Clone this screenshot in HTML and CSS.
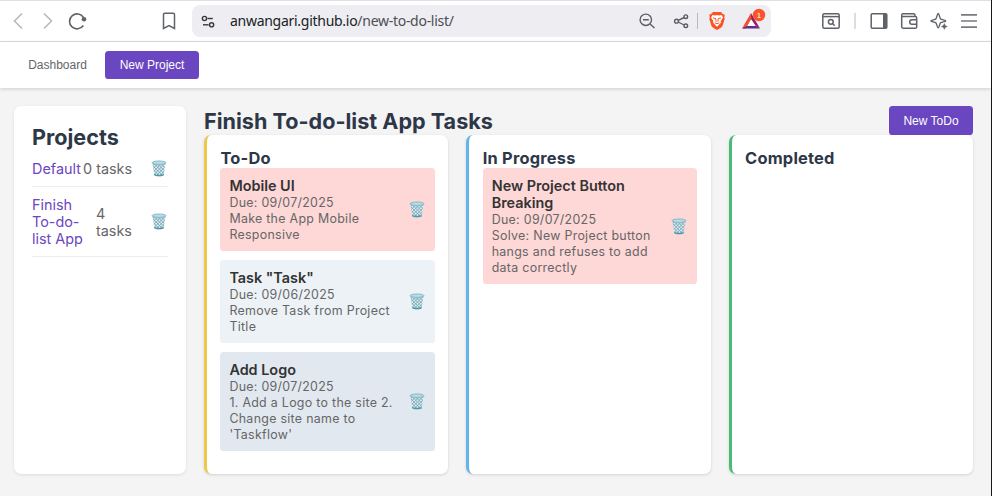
FILE: index.html
```html
<!DOCTYPE html>
<html lang="en">
<head>
<meta charset="utf-8">
<title>To-do list</title>
<link rel="stylesheet" href="styles.css">
</head>
<body>
<svg class="defs" width="0" height="0" aria-hidden="true">
  <defs>
    <pattern id="mesh" width="2.400" height="2.400" patternUnits="userSpaceOnUse" patternTransform="rotate(45)">
      <path d="M0 0H3M0 0V3" stroke="#6d9dad" stroke-width="1.200"/>
    </pattern>
    <symbol id="trash" viewBox="0 0 16 17">
      <path d="M1.600 3.200 3.300 15c.2 1.700 9.200 1.700 9.400 0L14.400 3.200Z" fill="#e0eff3"/>
      <path d="M1.600 3.200 3.300 15c.2 1.700 9.200 1.700 9.400 0L14.400 3.200Z" fill="url(#mesh)"/>
      <path d="M3.100 14 3.300 15.300c1 1.400 8.400 1.400 9.400 0l.2-1.300c-2 1.100-7.800 1.100-9.800 0Z" fill="#4c9bad"/>
      <ellipse cx="8" cy="2.700" rx="6.900" ry="1.700" fill="#b9dce6" stroke="#7bb3c2" stroke-width=".9"/>
      <path d="M1.300 4c2 1.500 11.400 1.500 13.400 0" fill="none" stroke="#94c2cf" stroke-width=".8"/>
    </symbol>
  </defs>
</svg>
<div class="window">
  <div class="browser-bar">
    <svg class="icons" width="190" height="40" viewBox="0 0 190 40" fill="none" stroke="#5f6368" stroke-width="1.600">
      <path d="M22 13.500 14.500 21 22 28.500M44 13.500 51.500 21 44 28.500" stroke="#b9b9bd"/>
      <path d="M83.300 25.500A7.500 7.500 0 1 1 83.500 17.500"/>
      <circle cx="84" cy="19.300" r="2.300" fill="#5f6368" stroke="none"/>
      <path d="M163.500 14.500q0-1.200 1.200-1.200h8.600q1.200 0 1.200 1.200v14L169 25.500l-5.500 3Z" stroke-width="1.500"/>
    </svg>
    <div class="address">
      <svg class="tune" width="16" height="16" viewBox="0 0 16 16" fill="none" stroke="#37383c" stroke-width="1.400">
        <circle cx="4.500" cy="4.500" r="2.100"/><path d="M7.500 4.500H12.800"/>
        <circle cx="11.600" cy="10.800" r="2.100"/><path d="M3 10.800H8.600"/>
      </svg>
      <span class="url">anwangari.github.io<span class="path">/new-to-do-list/</span></span>
      <svg class="address-icons" width="136" height="32" viewBox="635 5 136 32" fill="none">
        <g stroke="#5b5d63" stroke-width="1.400">
          <circle cx="645.800" cy="19.800" r="5.700"/><path d="M650 24 654.500 28M643 19.800H648.800"/>
          <circle cx="676.500" cy="21.200" r="1.900"/><circle cx="685.800" cy="16.700" r="1.800"/><circle cx="685.800" cy="25.800" r="1.800"/>
          <path d="m678.300 20.400 5.800-2.900M678.300 22l5.800 3"/>
        </g>
        <path d="M697.500 13V29" stroke="#b8b8be"/>
        <path d="m713 12 h8l2 2.200 1.700.3-.4 3 .4 1.500-2.200 7q-.6 1.300-5.500 4-4.900-2.700-5.500-4l-2.200-7 .4-1.500-.4-3 1.700-.3Z" fill="#fb5421"/>
        <path d="m712.500 15 2.800.6 1.700-.5 1.700.5 2.800-.6 1.500 2.500-2.300 3.600.2 1.700-3.900 4-3.900-4 .2-1.700-2.300-3.600Z" fill="#fff"/>
        <path d="m713 18 2.700.5.400 3.200M721 18l-2.700.5-.4 3.200M714.700 22.800l2.300 1 2.300-1" stroke="#fb5421" stroke-width="1"/>
        <path d="M751 13 742 28.500H746L751.200 19.500Z" fill="#f04e32"/>
        <path d="m751 13 9 15.500-4-2.300-4.800-7Z" fill="#9b1f63"/>
        <path d="M742 28.500h18l-4-2.500h-9Z" fill="#5f2d91"/>
        <path d="m751.100 19.600 3.800 6.500h-7.600Z" fill="#fff"/>
        <circle cx="759" cy="15" r="6.200" fill="#fb542b"/>
        <text class="badge" x="759" y="18" text-anchor="middle">1</text>
      </svg>
    </div>
    <svg class="icons-right" width="220" height="40" viewBox="771 1 220 40" fill="none" stroke="#5f6368" stroke-width="1.500">
      <rect x="822.800" y="13.800" width="16.400" height="14.400" rx="1.500"/><path d="M823 16.600H839"/>
      <circle cx="830.800" cy="21.800" r="2.400"/><path d="m832.700 23.700 2 2"/>
      <path d="M855 13V29" stroke="#dcdce2" stroke-width="2"/>
      <rect x="871.200" y="13.800" width="15.600" height="14.400" rx="1"/><path d="M883 14h4v14h-4Z" fill="#5f6368" stroke="none"/>
      <path d="M901.700 16.500h13.600q1.400 0 1.400 1.400v9q0 1.300-1.400 1.300h-12.200q-1.400 0-1.400-1.400V15.200q0-1.400 1.400-1.400h10.500q1.400 0 1.400 1.400v1M917 19.700h-5q-2.300 0-2.300 2.300t2.300 2.300h5"/>
      <path d="M938.200 13.500c1 0 1.400 4.600 2.400 5.500s5.200 1 5.200 1.900-4.200 1-5.200 1.900-1.400 5-2.400 5-1.400-4.100-2.400-5-4.900-1-4.900-1.900 3.900-1 4.900-1.900 1.400-5.500 2.400-5.500Z" stroke-width="1.400"/>
      <path d="m944.300 22.700 1.200 2.600 2.600 1.200-2.600 1.200-1.200 2.600-1.200-2.600-2.600-1.200 2.600-1.200Z" fill="#5f6368" stroke="#fff" stroke-width=".4"/>
      <path d="M961 14.800H977M961 21H977M961 27.200H977" stroke="#777a7f" stroke-width="1.700"/>
    </svg>
  </div>
  <header class="site-header">
    <button class="nav-link">Dashboard</button>
    <button class="button">New Project</button>
  </header>
  <div class="layout">
    <aside class="sidebar">
      <h2>Projects</h2>
      <ul class="projects">
        <li class="tight"><a>Default</a><span>0 tasks</span><svg class="trash"><use href="#trash"/></svg></li>
        <li><a>Finish<br>To-do-<br>list App</a><span>4<br>tasks</span><svg class="trash"><use href="#trash"/></svg></li>
      </ul>
    </aside>
    <main class="board">
      <div class="board-head"><h2>Finish To-do-list App Tasks</h2><button class="button new-todo">New ToDo</button></div>
      <div class="columns">
        <section class="column todo">
          <h3>To-Do</h3>
          <article class="card high"><div class="copy"><h4>Mobile UI</h4><p>Due: 09/07/2025</p><p>Make the App Mobile<br>Responsive</p></div><svg class="trash"><use href="#trash"/></svg></article>
          <article class="card low"><div class="copy"><h4>Task "Task"</h4><p>Due: 09/06/2025</p><p>Remove Task from Project<br>Title</p></div><svg class="trash"><use href="#trash"/></svg></article>
          <article class="card medium"><div class="copy"><h4>Add Logo</h4><p>Due: 09/07/2025</p><p>1. Add a Logo to the site 2.<br>Change site name to<br>'Taskflow'</p></div><svg class="trash"><use href="#trash"/></svg></article>
        </section>
        <section class="column progress">
          <h3>In Progress</h3>
          <article class="card high"><div class="copy"><h4>New Project Button<br>Breaking</h4><p>Due: 09/07/2025</p><p>Solve: New Project button<br>hangs and refuses to add<br>data correctly</p></div><svg class="trash"><use href="#trash"/></svg></article>
        </section>
        <section class="column done"><h3>Completed</h3></section>
      </div>
    </main>
  </div>
</div>
</body>
</html>
```
FILE: styles.css
```css
* { box-sizing: border-box; margin: 0; padding: 0; }
body { width: 992px; height: 496px; overflow: hidden; background: #18181b; font: 14.4px/17px Inter, sans-serif; color: #333; }
svg { display: block; flex: none; }
.defs { position: absolute; }
.window { width: 991px; height: 496px; background: #f4f4f4; display: flex; flex-direction: column; }
.browser-bar { height: 42px; flex: none; display: flex; background: #fff; border-top: 1px solid #dfdfe5; border-bottom: 1px solid #dedee2; }
.icons { margin: -1px 2px 0 0; }
.address { width: 579px; height: 32px; margin-top: 4px; display: flex; align-items: center; background: #ededf2; border-radius: 8px; }
.tune { margin: 1px 0 0 8px; }
.url { flex: 1; margin-left: 14px; font: 14px/20px "Noto Sans", sans-serif; letter-spacing: -.28px; color: #202124; white-space: nowrap; }
.path { color: #4d4e54; }
.badge { font: 8px "Liberation Sans", sans-serif; fill: #fff; }
.site-header { height: 46px; flex: none; display: flex; align-items: center; padding-left: 14px; background: #fff; box-shadow: 0 1px 4px rgba(0,0,0,.16); }
button { border: 0; font: 12px/14px "Liberation Sans", sans-serif; }
.nav-link { width: 91px; background: none; color: #666; padding-right: 4px; }
.button { width: 94px; height: 28px; border-radius: 3.600px; background: #6b46c1; color: #fff; }
.layout { display: flex; gap: 18px; padding: 18px 18px 22px 14px; flex: 1; min-height: 0; }
.sidebar { width: 172px; padding: 18px; background: #fff; border-radius: 7px; box-shadow: 0 1px 3px rgba(0,0,0,.1); }
h2 { font-size: 21.600px; line-height: 26px; color: #2d3748; }
.projects { list-style: none; }
.projects li { display: grid; grid-template-columns: 64px 55px 17px; align-items: center; padding: 9px 0; border-bottom: 1px solid #ededed; color: #666; }
.projects .tight { grid-template-columns: 51px 68px 17px; padding-top: 10px; }
a { color: #6b46c1; }
.trash { width: 16px; height: 17px; }
.board { flex: 1; display: flex; flex-direction: column; }
.board-head { height: 29px; display: flex; justify-content: space-between; align-items: center; }
.board-head h2 { padding-top: 1px; }
.new-todo { width: 84px; height: 29px; }
.columns { flex: 1; display: grid; grid-template-columns: repeat(3, 1fr); gap: 18px; }
.column { padding: 13px 13.400px; background: #fff; border-left: 3px solid; border-radius: 7px; box-shadow: 0 1px 3px rgba(0,0,0,.14); }
.todo { border-left-color: #ecc94b; }
.progress { border-left-color: #63b3ed; }
.done { border-left-color: #48bb78; }
h3 { font-size: 16.400px; letter-spacing: .22px; line-height: 20px; color: #2d3748; }
.card { display: flex; align-items: center; justify-content: space-between; padding: 9px 10px 9px 9px; margin-bottom: 9px; border-radius: 3.600px; }
.high { background: #fed7d7; }
.low { background: #edf2f7; }
.medium { background: #e2e8f0; }
h4 { font-size: 14.400px; font-weight: 600; line-height: 17px; margin-bottom: 1px; }
.copy { margin-bottom: -1px; }
.copy p { font-size: 12.400px; letter-spacing: .3px; line-height: 16px; color: #666; white-space: nowrap; }
```
